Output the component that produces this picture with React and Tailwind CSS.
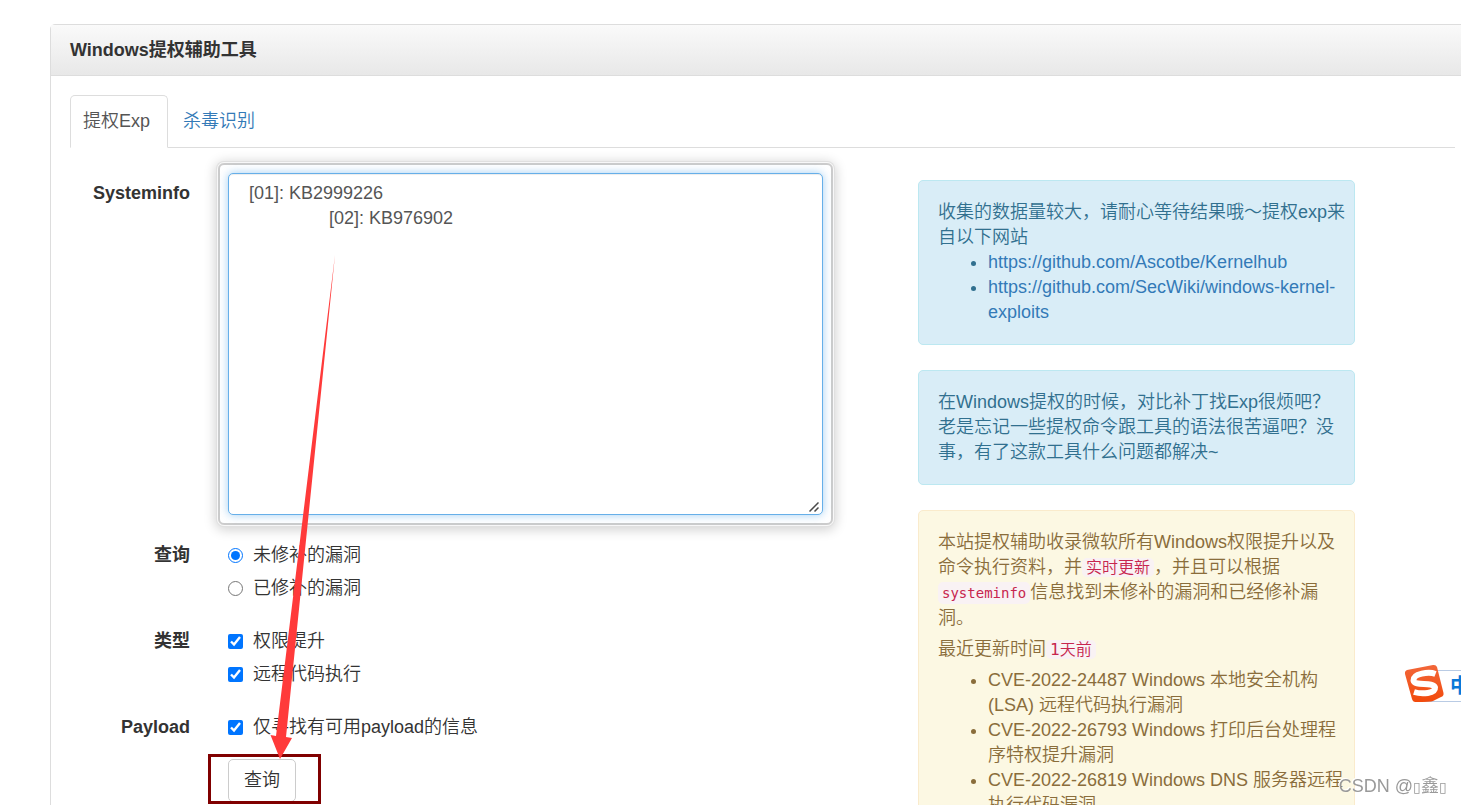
const INITIAL_INFO = "  [01]: KB2999226\n" + " ".repeat(18) + "[02]: KB976902";

function Tabs() {
  return (
    <nav className="flex border-b border-[#ddd]">
      <a href="#exp" aria-current="page" className="-mb-px mr-0.5 rounded-t-[5px] border border-[#ddd] border-b-white bg-white py-[13px] pl-3 pr-[17px] text-[#555]">
        提权Exp
      </a>
      <a href="#av" className="-mb-px border border-transparent px-3 py-[13px] text-[#337ab7]">
        杀毒识别
      </a>
    </nav>
  );
}

function Choice({ type, name, label, checked }) {
  return (
    <label className="flex items-center gap-2.5">
      <input type={type} name={name} defaultChecked={checked} className="m-0 size-[15px]" />
      <span>{label}</span>
    </label>
  );
}

function ChoiceRow({ title, children }) {
  return (
    <fieldset className="mt-7 flex gap-[38px]">
      <legend className="float-left w-[120px] shrink-0 text-right font-bold">{title}</legend>
      <div className="flex flex-col gap-2">{children}</div>
    </fieldset>
  );
}

function QueryForm() {
  return (
    <form className="pt-[25px]" onSubmit={(e) => e.preventDefault()}>
      <div className="flex gap-[38px]">
        <label htmlFor="sysinfo" className="w-[120px] shrink-0 pt-2 text-right font-bold">
          Systeminfo
        </label>
        <div className="relative -m-2.5 flex-1 rounded-md border-2 border-[#ccc] p-2 shadow-[0_0_0_1px_#f8f8f8,0_0_0_2px_#e0e0e0,0_2px_12px_3px_rgba(0,0,0,0.18)]">
          <textarea
            id="sysinfo"
            defaultValue={INITIAL_INFO}
            spellCheck={false}
            className="block h-[342px] w-full resize rounded-[5px] border border-[#66afe9] bg-white px-2.5 py-[7px] text-[#555] shadow-[inset_0_1px_1px_rgba(0,0,0,0.075),0_0_10px_rgba(102,175,233,0.6)] outline-none [&::-webkit-resizer]:bg-transparent"
          />
          <svg className="pointer-events-none absolute bottom-[11px] right-3" width="10" height="10" viewBox="0 0 10 10" aria-hidden="true">
            <path d="M0.500 9.500 L9.500 0.500 M5.500 9.500 L9.500 5.500" fill="none" stroke="#4a4a4a" strokeWidth="1.500" />
          </svg>
        </div>
      </div>
      <ChoiceRow title="查询">
        <Choice type="radio" name="patched" label="未修补的漏洞" checked />
        <Choice type="radio" name="patched" label="已修补的漏洞" />
      </ChoiceRow>
      <ChoiceRow title="类型">
        <Choice type="checkbox" name="privilege" label="权限提升" checked />
        <Choice type="checkbox" name="rce" label="远程代码执行" checked />
      </ChoiceRow>
      <ChoiceRow title="Payload">
        <Choice type="checkbox" name="payload" label="仅寻找有可用payload的信息" checked />
      </ChoiceRow>
      <div className="mt-[19px] flex pl-[158px]">
        <div className="relative">
          <button type="submit" className="block rounded-[5px] border border-[#ccc] bg-white px-[15px] py-2">
            查询
          </button>
          <div className="pointer-events-none absolute -left-5 -top-[5px] h-[50px] w-[113px] border-3 border-[#800000]" />
          <svg className="pointer-events-none absolute bottom-[43px] left-[40px]" width="70" height="505" viewBox="268 253 70 505" aria-hidden="true">
            <path d="M335 254 L286 736 L292 737 L280 758 L270.500 734 L276 735 Z" fill="#ff3a3a" />
          </svg>
        </div>
      </div>
    </form>
  );
}

function Alert({ tone, children }) {
  const tones = {
    info: "border-[#bce8f1] bg-[#d9edf7] text-[#31708f]",
    warning: "border-[#faebcc] bg-[#fcf8e3] text-[#8a6d3b]",
  };
  return <section className={"rounded-[5px] border py-[19px] pl-[19px] pr-2 " + tones[tone]}>{children}</section>;
}

function Code({ children, small }) {
  return (
    <code className={"rounded-[5px] bg-[#f9f2f4] px-1 font-['DejaVu_Sans_Mono','Noto_Sans_CJK_SC',monospace] text-[#c7254e] " + (small ? "py-[3px] text-[14px]" : "text-[16px]")}>
      {children}
    </code>
  );
}

export default function App() {
  return (
    <div className="h-screen overflow-hidden bg-white pl-[50px] pt-6 font-['Liberation_Sans','Noto_Sans_CJK_SC',sans-serif] text-[18px] font-[350] leading-[25px] text-[#333]">
      <main className="-mr-[14px] rounded-[5px] border border-[#ddd]">
        <header className="border-b border-[#ddd] bg-linear-to-b from-[#fafafa] to-[#e8e8e8] px-[19px] pb-3 pt-[13px]">
          <h1 className="font-bold">Windows提权辅助工具</h1>
        </header>
        <div className="p-[19px]">
          <Tabs />
          <div className="grid grid-cols-[753fr_437fr] gap-[95px] pr-[100px]">
            <QueryForm />
            <aside className="flex min-w-0 flex-col gap-[25px] pt-8">
              <Alert tone="info">
                <p>收集的数据量较大，请耐心等待结果哦～提权exp来自以下网站</p>
                <ul className="list-disc pl-[50px]">
                  <li>
                    <a href="https://github.com/Ascotbe/Kernelhub" className="text-[#337ab7]">https://github.com/Ascotbe/Kernelhub</a>
                  </li>
                  <li>
                    <a href="https://github.com/SecWiki/windows-kernel-exploits" className="text-[#337ab7]">https://github.com/SecWiki/windows-kernel-exploits</a>
                  </li>
                </ul>
              </Alert>
              <Alert tone="info">
                <p>
                  在Windows提权的时候，对比补丁找Exp很烦吧？
                  <br />
                  老是忘记一些提权命令跟工具的语法很苦逼吧？没事，有了这款工具什么问题都解决~
                </p>
              </Alert>
              <Alert tone="warning">
                <p>
                  本站提权辅助收录微软所有Windows权限提升以及命令执行资料，并<Code>实时更新</Code>，并且可以根据
                  <Code small>systeminfo</Code>信息找到未修补的漏洞和已经修补漏洞。
                </p>
                <p className="mt-1.5">
                  最近更新时间<Code>1天前</Code>
                </p>
                <ul className="mt-1.5 list-disc pl-[50px]">
                  <li>CVE-2022-24487 Windows 本地安全机构 (LSA) 远程代码执行漏洞</li>
                  <li>CVE-2022-26793 Windows 打印后台处理程序特权提升漏洞</li>
                  <li>CVE-2022-26819 Windows DNS 服务器远程执行代码漏洞</li>
                </ul>
              </Alert>
            </aside>
          </div>
        </div>
      </main>

      <div className="fixed right-0 top-[664px] flex h-[39px] w-[57px] overflow-hidden">
        <div className="mb-px ml-5 mt-1.5 w-full border-y border-[#b9cbe4] bg-white" />
        <span className="absolute left-[46px] top-[10px] text-[20px] font-bold text-[#0a78d8]">中</span>
        <svg className="absolute left-0 top-0" width="41" height="40" viewBox="0 0 41 40" aria-hidden="true">
          <defs>
            <linearGradient id="ime" x1="0" y1="0" x2="0" y2="1">
              <stop offset="0" stopColor="#f2673a" />
              <stop offset="1" stopColor="#f24a0c" />
            </linearGradient>
          </defs>
          <path d="M3 6 L29 1 Q32 .5 33 3 L39.500 29 Q40 32 37 33 L29 37 Q27 38 12 38 Q9 38.500 8 35 L1 10 Q.5 7 3 6 Z" fill="url(#ime)" />
          <path d="M31.500 10 C25 7.500 9 9.500 9.500 16.500 C10.500 22.500 29 17.500 31 23.500 C31.500 29.500 18 30.500 10 28" fill="none" stroke="#fff" strokeWidth="6" />
        </svg>
      </div>
      <div className="fixed bottom-[5px] right-3.5 text-[#999] [text-shadow:-1px_-1px_0_#fff]">
        CSDN @<span className="text-[14px]">▯</span>鑫<span className="text-[14px]">▯</span>
      </div>
    </div>
  );
}
